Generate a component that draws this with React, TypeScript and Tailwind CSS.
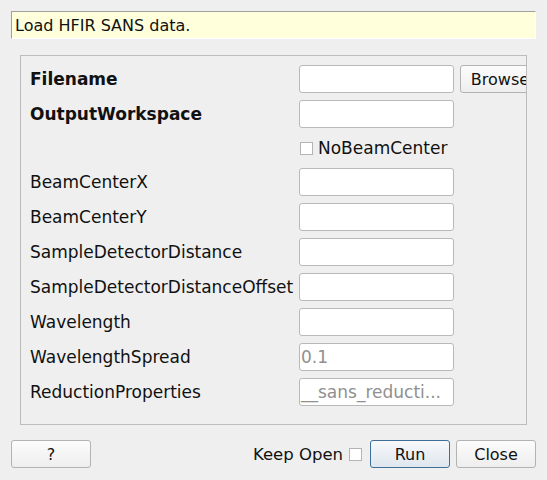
const font = { fontFamily: '"DejaVu Sans", sans-serif' }

interface Row {
  label: string
  bold?: boolean
  value?: string
  browse?: boolean
}

const rows: Row[] = [
  { label: 'Filename', bold: true, browse: true },
  { label: 'OutputWorkspace', bold: true },
]

const lowerRows: Row[] = [
  { label: 'BeamCenterX' },
  { label: 'BeamCenterY' },
  { label: 'SampleDetectorDistance' },
  { label: 'SampleDetectorDistanceOffset' },
  { label: 'Wavelength' },
  { label: 'WavelengthSpread', value: '0.1' },
  { label: 'ReductionProperties', value: '__sans_reducti...' },
]

function Button({ children, primary }: { children: React.ReactNode; primary?: boolean }) {
  return (
    <button
      className={
        primary
          ? 'h-[28px] w-[80px] shrink-0 rounded-[3px] border border-[#3f6f98] bg-gradient-to-b from-[#f7f9fb] to-[#dfe6ed] pt-[1px] text-[16px] text-[#111]'
          : 'h-[28px] w-[80px] shrink-0 rounded-[3px] border border-[#b3b3b3] bg-gradient-to-b from-[#fcfcfc] to-[#eeeeee] pt-[1px] text-[16px] text-[#111]'
      }
    >
      {children}
    </button>
  )
}

function Field({ row }: { row: Row }) {
  return (
    <div className="flex h-[28px] items-center">
      <span className={`w-[269px] shrink-0 pt-[2px] text-[17px] text-[#111] ${row.bold ? 'font-bold' : ''}`}>
        {row.label}
      </span>
      <div className="flex h-[28px] w-[155px] shrink-0 items-center rounded-[3px] border border-[#b9b9b9] bg-white px-[1px] pt-[1px] text-[17px] text-[#909090]">
        {row.value}
      </div>
      {row.browse && (
        <div className="ml-[6px] shrink-0">
          <Button>Browse</Button>
        </div>
      )}
    </div>
  )
}

export default function App() {
  return (
    <div className="flex h-[480px] w-[547px] flex-col bg-[#efefef] px-[11px] pt-[11px]" style={font}>
      <div className="flex h-[28px] items-center border-t border-l border-b border-r border-t-[#a0a0a0] border-l-[#a0a0a0] border-b-white border-r-white bg-[#ffffdc] px-[3px] pt-[1px] text-[16px] text-[#111]">
        Load HFIR SANS data.
      </div>

      <div className="mx-[9px] mt-[16px] flex h-[370px] flex-col gap-[7px] overflow-hidden border border-[#bcbcbc] pt-[9px] pl-[9px]">
        {rows.map(r => (
          <Field key={r.label} row={r} />
        ))}
        <div className="flex h-[26px] items-center">
          <span className="w-[270px] shrink-0" />
          <span className="h-[13px] w-[13px] shrink-0 border border-[#b4b4b4] bg-white" />
          <span className="ml-[5px] pt-[2px] text-[17px] text-[#111]">NoBeamCenter</span>
        </div>
        {lowerRows.map(r => (
          <Field key={r.label} row={r} />
        ))}
      </div>

      <div className="mt-[15px] flex items-center">
        <Button>?</Button>
        <div className="flex-1" />
        <span className="pt-[2px] text-[16.5px] text-[#111]">Keep Open</span>
        <span className="ml-[6px] h-[13px] w-[13px] border border-[#b4b4b4] bg-white" />
        <div className="ml-[8px]">
          <Button primary>Run</Button>
        </div>
        <div className="ml-[6px]">
          <Button>Close</Button>
        </div>
      </div>
    </div>
  )
}
